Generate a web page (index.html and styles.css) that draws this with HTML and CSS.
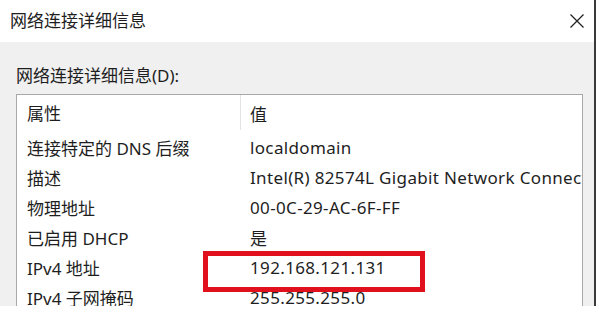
FILE: index.html
```html
<!DOCTYPE html>
<html lang="zh-CN">
<head>
<meta charset="utf-8">
<title>网络连接详细信息</title>
<link rel="stylesheet" href="styles.css">
</head>
<body>
<div class="window">
  <div class="titlebar">
    <span class="title">网络连接详细信息</span>
    <span class="close" aria-label="关闭">
      <svg width="14" height="14" viewBox="0 0 14 14"><path d="M0.5 0.5 L13.5 13.5 M13.5 0.5 L0.5 13.5" stroke="#222" stroke-width="1.3" fill="none"/></svg>
    </span>
  </div>
  <div class="content">
    <div class="label">网络连接详细信息(D):</div>
    <div class="listbox">
      <div class="row header">
        <div class="c1">属性</div>
        <div class="c2">值</div>
      </div>
      <div class="row"><div class="c1">连接特定的 DNS 后缀</div><div class="c2">localdomain</div></div>
      <div class="row"><div class="c1">描述</div><div class="c2">Intel(R) 82574L Gigabit Network Connection</div></div>
      <div class="row"><div class="c1">物理地址</div><div class="c2">00-0C-29-AC-6F-FF</div></div>
      <div class="row"><div class="c1">已启用 DHCP</div><div class="c2">是</div></div>
      <div class="row"><div class="c1">IPv4 地址</div><div class="c2">192.168.121.131</div></div>
      <div class="row"><div class="c1">IPv4 子网掩码</div><div class="c2">255.255.255.0</div></div>
      <div class="highlight"></div>
    </div>
  </div>
</div>
</body>
</html>
```
FILE: styles.css
```css
html, body {
  margin: 0;
  padding: 0;
  background: #ffffff;
}
body {
  width: 599px;
  height: 318px;
  overflow: hidden;
  font-family: "Noto Sans", "Noto Sans CJK SC", sans-serif;
  font-size: 17px;
  color: #1e1e1e;
}
.window {
  width: 594px;
  height: 306px;
  border-right: 2px solid #3a3a3a;
  display: flex;
  flex-direction: column;
  overflow: hidden;
}
.titlebar {
  height: 42px;
  flex: none;
  background: #ffffff;
  display: flex;
  align-items: center;
  justify-content: space-between;
  padding: 0 10px 0 10px;
  box-sizing: border-box;
}
.title {
  font-size: 17px;
  line-height: 22px;
}
.close {
  display: flex;
  margin-right: 0;
}
.content {
  flex: 1;
  background: #f0f0f0;
  padding: 22px 11px 0 16px;
  display: flex;
  flex-direction: column;
}
.label {
  line-height: 24px;
  height: 30px;
}
.listbox {
  position: relative;
  flex: 1;
  background: #ffffff;
  border: 1px solid #a8a8a8;
  border-bottom: none;
}
.row {
  display: flex;
  height: 30px;
  align-items: center;
  white-space: nowrap;
}
.row.header {
  height: 37px;
  align-items: stretch;
}
.row.header .c1,
.row.header .c2 {
  display: flex;
  align-items: center;
  padding-bottom: 1px;
}
.row.header .c1 {
  border-right: 1px solid #e3e3e3;
  height: 34px;
}
.c1 {
  width: 213px;
  padding-left: 10px;
  flex: none;
}
.c2 {
  padding-left: 9px;
  overflow: hidden;
  letter-spacing: 0.35px;
}
.row .c2 {
  margin-left: 1px;
}
.row.header .c2 {
  margin-left: 0;
}
.highlight {
  position: absolute;
  left: 186px;
  top: 156px;
  width: 212px;
  height: 31px;
  border: 5px solid #e0101c;
}
```
